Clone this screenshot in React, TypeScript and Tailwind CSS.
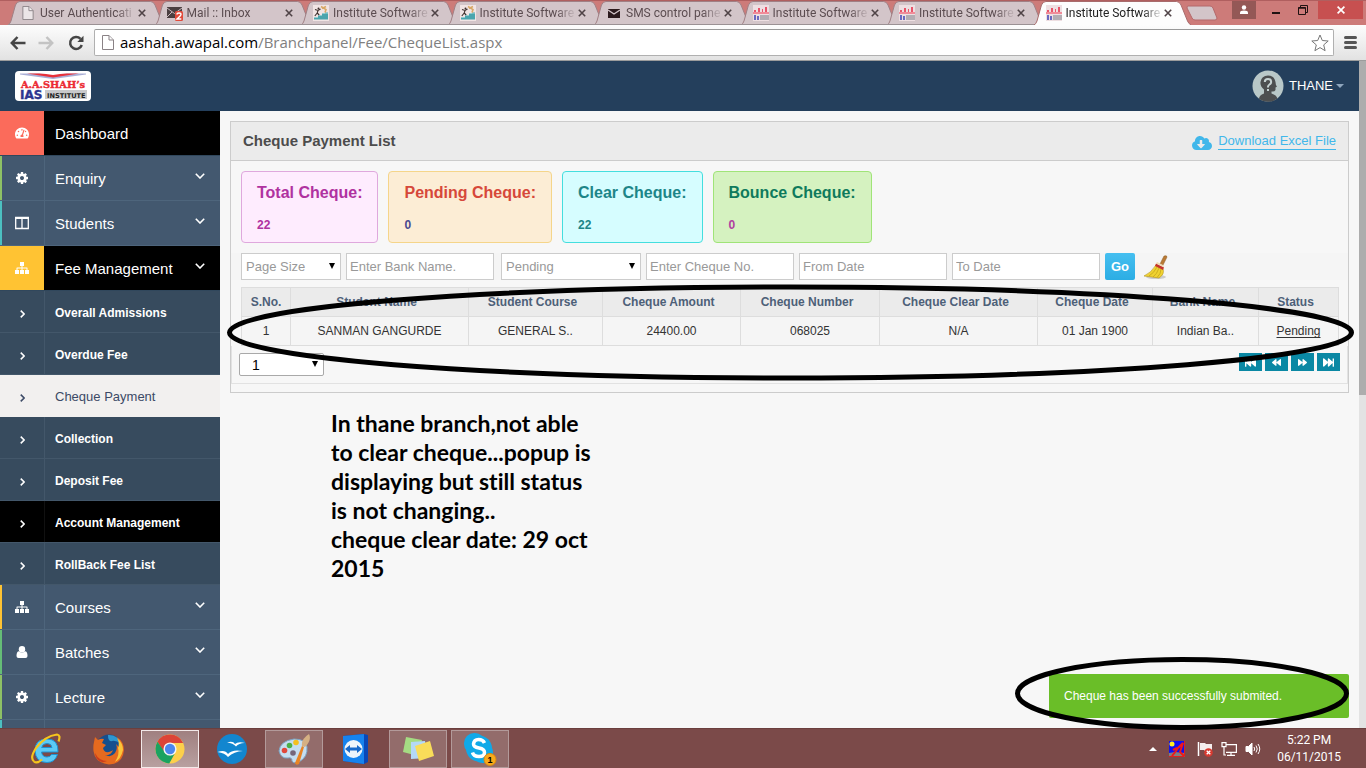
import React from "react";
import {
  FaBackward,
  FaCloudDownloadAlt,
  FaFastBackward,
  FaFastForward,
  FaForward,
  FaTachometerAlt,
} from "react-icons/fa";

/* ---------- browser chrome ---------- */

function PageIcon({ className }: { className: string }) {
  return (
    <svg viewBox="0 0 12 15" className={className} fill="#fff" fillOpacity=".55" stroke="#8a8286">
      <path d="M.5.5h6.5l4.500 4.500v9.500H.5z" />
      <path d="M7 .5v4.500h4.500" />
    </svg>
  );
}

function MailBadgeIcon() {
  return (
    <svg viewBox="0 0 16 16" className="size-4">
      <rect y="2" width="15" height="11" fill="#4a3f41" />
      <path d="M0 3l7.500 5.500L15 3M0 12l5-5M15 12l-5-5" stroke="#c9b9bd" fill="none" />
      <rect x="8" y="6" width="8" height="10" rx="1.500" fill="#e14a3a" />
      <path d="M10 9.500q0-1.500 2-1.500t2 1.500q0 1-4 4.500h4.300" fill="none" stroke="#fff" strokeWidth="1.400" />
    </svg>
  );
}

function StepsIcon() {
  return (
    <svg viewBox="0 0 16 16" className="size-4">
      <rect width="16" height="16" fill="#f1e4e4" />
      <path d="M1 14.500v-2h4v-2h4v-2h3v-1h3v7z" fill="#4aa5ae" />
      <path d="M1 12.500h4M5 10.500h4M9 8.500h6" stroke="#8fd0d4" strokeWidth=".6" />
      <circle cx="5.500" cy="3.500" r="1" fill="#3d2f2c" />
      <path d="M2 4.500l3 1 2.500-1.500M5 5.500L4.200 8l2 2M4.200 8l-2.400 3" stroke="#3d2f2c" strokeWidth="1.100" fill="none" />
      <path d="M8 1.500l5 3-1 3M9 3.500l4-2" stroke="#d8a866" strokeWidth="1.600" fill="none" />
    </svg>
  );
}

function EnvelopeIcon() {
  return (
    <svg viewBox="0 0 16 16" className="size-4">
      <rect x="2" y="4" width="12" height="9" fill="#2b1a1d" />
      <path d="M2 5l6 4 6-4" stroke="#d3c5c9" strokeWidth="1.300" fill="none" />
    </svg>
  );
}

function LogoFavicon() {
  return (
    <svg viewBox="0 0 16 16" className="size-4">
      <rect width="16" height="16" fill="#eedfe2" />
      <path d="M1 5h2v3H1zM5 3h2v5H5zM9 4h1v4H9zM12 2h2v6h-2z" fill="#e8556a" />
      <path d="M0 7h16v2H0z" fill="#f08b98" />
      <path d="M1 10h2v5H1zM4 11h2v4H4z" fill="#6a6ac0" />
      <path d="M7 10h9v5H7z" fill="#b3adb3" />
    </svg>
  );
}

const tabs = [
  { title: "User Authenticati", icon: <PageIcon className="h-3.5 w-4" /> },
  { title: "Mail :: Inbox", icon: <MailBadgeIcon /> },
  { title: "Institute Software", icon: <StepsIcon /> },
  { title: "Institute Software", icon: <StepsIcon /> },
  { title: "SMS control pane", icon: <EnvelopeIcon /> },
  { title: "Institute Software", icon: <LogoFavicon /> },
  { title: "Institute Software", icon: <LogoFavicon /> },
  { title: "Institute Software", icon: <LogoFavicon />, active: true },
];

function TabStrip() {
  return (
    <div className="flex h-[25px] shrink-0 justify-between border-t border-[#b05f5f] bg-[#cd7b79] font-[Roboto,sans-serif]">
      <div className="flex min-w-0 flex-1 pl-2">
        <div className="grid w-[1172px] grid-cols-8">
          {tabs.map((tab, i) => (
            <div key={i} className={tab.active ? "relative z-10 flex items-center pl-3" : "relative flex items-center pl-3"}>
              <svg
                viewBox="0 0 158 24"
                preserveAspectRatio="none"
                className="absolute left-0 top-0 h-6 w-[calc(100%+11px)]"
              >
                <path
                  d="M0 24Q2 23 3 20L7.500 4Q9 .5 12 .5H143Q146 .5 147.500 4L154 20Q155 23 158 24z"
                  fill={tab.active ? "#fdfdfd" : "#d3c5c9"}
                />
                <path
                  d="M0 24Q2 23 3 20L7.500 4Q9 .5 12 .5H143Q146 .5 147.500 4L154 20Q155 23 158 24"
                  fill="none"
                  stroke={tab.active ? "#a86a6b" : "#a08085"}
                />
                {!tab.active && <path d="M0 23.500H158" stroke="#9b9194" />}
              </svg>
              <span className="relative shrink-0">{tab.icon}</span>
              <span
                className={
                  tab.active
                    ? "relative ml-1 w-[98px] shrink-0 whitespace-nowrap text-xs text-[#222] [mask-image:linear-gradient(to_right,#000_78%,rgb(0_0_0/0.2)_94%)]"
                    : "relative ml-1 w-[98px] shrink-0 whitespace-nowrap text-xs text-[#5b4c50] [mask-image:linear-gradient(to_right,#000_78%,rgb(0_0_0/0.2)_94%)]"
                }
              >
                {tab.title}
              </span>
              <button aria-label="Close tab" className="relative shrink-0">
                <svg viewBox="0 0 8 8" className="size-2" stroke="#4f4346" strokeWidth="1.600">
                  <path d="M.8.8l6.400 6.400M7.200.8L.8 7.200" />
                </svg>
              </button>
            </div>
          ))}
        </div>
        <button aria-label="New tab" className="ml-1.5 h-6">
          <svg viewBox="0 0 32 16" className="h-4 w-8">
            <path d="M2 1h22q2 0 3 2l4 10q0 2-2 2H9q-2 0-3-2L1 3q0-2 1-2z" fill="#d3c5c9" stroke="#b4696b" />
          </svg>
        </button>
      </div>
      <div className="flex h-[18px] shrink-0 pr-[3px]">
        <button aria-label="Profile" className="flex w-6 items-center justify-center bg-[#945856]">
          <svg viewBox="0 0 10 10" className="size-2.5" fill="#fff">
            <circle cx="5" cy="2.500" r="2.200" />
            <path d="M1 9V7.500Q1 5.500 5 5.500t4 2V9z" />
          </svg>
        </button>
        <button aria-label="Minimize" className="ml-4 flex w-2.5 items-center">
          <span className="mt-1.5 h-0.5 w-2 bg-[#1f1212]" />
        </button>
        <button aria-label="Restore" className="ml-4 flex w-2.5 items-center">
          <svg viewBox="0 0 10 10" className="size-2.5" fill="none" stroke="#1f1212">
            <path d="M.5 2.500h7v7h-7zM2.500 2.500v-2h7v7h-2" />
            <path d="M.5 3h7" strokeWidth="1.500" />
          </svg>
        </button>
        <button aria-label="Close" className="ml-2.5 flex w-[45px] items-center justify-center bg-[#c75050]">
          <svg viewBox="0 0 8 8" className="size-2" stroke="#fff" strokeWidth="1.700">
            <path d="M.6.6l6.800 6.800M7.400.6L.6 7.400" />
          </svg>
        </button>
      </div>
    </div>
  );
}

function AddressBar() {
  return (
    <div className="flex h-9 shrink-0 items-center border-b border-[#9c9c9c] bg-linear-to-b from-[#fdfdfd] to-[#e2e2e2] pl-2.5">
      <button aria-label="Back">
        <svg viewBox="0 0 16 14" className="h-3.5 w-4" fill="none" stroke="#454545" strokeWidth="2.500">
          <path d="M15.500 7H2M7.500 1L1.800 7l5.700 6" />
        </svg>
      </button>
      <button aria-label="Forward" className="ml-3">
        <svg viewBox="0 0 16 14" className="h-3.5 w-4" fill="none" stroke="#c3c3c3" strokeWidth="2.500">
          <path d="M.5 7H14M8.500 1l5.700 6-5.700 6" />
        </svg>
      </button>
      <button aria-label="Reload" className="ml-3.5">
        <svg viewBox="0 0 16 16" className="size-4" fill="none" stroke="#454545" strokeWidth="2.500">
          <path d="M13.800 10A6 6 0 1 1 12.500 3.800" />
          <path d="M15.500.8v6.200H9.300z" fill="#454545" stroke="none" />
        </svg>
      </button>
      <div className="ml-2.5 flex h-[27px] min-w-0 flex-1 items-center rounded-xs border border-[#b0b0b0] border-t-[#999] bg-white pl-[7px] pr-1">
        <PageIcon className="h-[15px] w-3 shrink-0" />
        <span className="ml-1.5 flex-1 whitespace-nowrap pb-0.5 font-['Open_Sans',sans-serif] text-[15px] leading-5 text-[#808080]">
          <span className="text-black">aashah.awapal.com</span>/Branchpanel/Fee/ChequeList.aspx
        </span>
        <button aria-label="Bookmark">
          <svg viewBox="0 0 18 18" className="size-[18px]" fill="none" stroke="#777" strokeLinejoin="round">
            <path d="M9 1l2.300 5.500 5.900.5-4.500 3.900 1.400 5.800L9 13.600l-5.100 3.100 1.400-5.800L.8 7l5.900-.5z" />
          </svg>
        </button>
      </div>
      <button aria-label="Menu" className="ml-2.5 mr-[9px] flex w-[13px] flex-col gap-0.5">
        <span className="h-[3px] rounded-full bg-[#555]" />
        <span className="h-[3px] rounded-full bg-[#555]" />
        <span className="h-[3px] rounded-full bg-[#555]" />
      </button>
    </div>
  );
}

/* ---------- web page ---------- */

function InstituteLogo() {
  return (
    <a href="#home" aria-label="Home">
      <svg viewBox="0 0 76 30" className="h-[30px] w-[76px]">
        <rect width="76" height="30" rx="4" fill="#fff" />
        <path d="M5 2.500h66v1L38 8 5 3.500z" fill="#a9aed6" />
        <path d="M12 2.500h52L38 6.500z" fill="#e8303a" />
        <path d="M24 2h28L38 4z" fill="#fff" />
        <rect x="30" y="19" width="42" height="9" fill="#c9c9cb" />
        <text x="6" y="17" fontFamily="DejaVu Serif, serif" fontWeight="bold" fontSize="9.800" fill="#ec2b34" stroke="#ec2b34" strokeWidth=".4">
          A.A.SHAH’s
        </text>
        <text x="5" y="27.500" fontFamily="DejaVu Sans, sans-serif" fontWeight="bold" fontSize="12" fill="#2d3590" stroke="#2d3590" strokeWidth=".4">
          IAS
        </text>
        <text x="32" y="26.500" fontFamily="DejaVu Sans, sans-serif" fontWeight="bold" fontSize="6.600" fill="#222">
          INSTITUTE
        </text>
      </svg>
    </a>
  );
}

function SiteHeader() {
  return (
    <header className="flex h-[50px] shrink-0 items-center justify-between bg-[#243f5c] pl-[15px] pr-[15px]">
      <InstituteLogo />
      <button className="flex items-center">
        <svg viewBox="0 0 32 32" className="size-8">
          <circle cx="16" cy="16" r="15.500" fill="#b9c8c8" />
          <path d="M7 29q0-4 5-5.500v-4Q8 16 8.500 12 9.500 5.500 16 5.500T23.500 12q0 3 1.500 4.500l-1.500 1v2.500q-1 2-4 1.500v2q5 1.500 6 5A15.500 15.500 0 0 1 7 29z" fill="#4d4f50" />
          <path d="M12.800 12q0-3 3.200-3t3.200 3q0 1.500-1.700 2.500t-1.500 3M16 19v2" fill="none" stroke="#c6d2d2" strokeWidth="2" />
        </svg>
        <span className="ml-[5px] text-[13px] text-white">THANE</span>
        <svg viewBox="0 0 8 4" className="ml-[3px] h-1 w-2" fill="#8fa6bd">
          <path d="M0 0h8L4 4z" />
        </svg>
      </button>
    </header>
  );
}

function CogIcon() {
  return (
    <svg viewBox="0 0 1792 1792" className="size-3.5" fill="currentColor">
      <path d="M1152 896q0-106-75-181t-181-75-181 75-75 181 75 181 181 75 181-75 75-181zm512-109v222q0 12-8 23t-20 13l-185 28q-19 54-39 91 35 50 107 138 10 12 10 25t-9 23q-27 37-99 108t-94 71q-12 0-26-9l-138-108q-44 23-91 38-16 136-29 186-7 28-36 28h-222q-14 0-24.500-8.500t-11.500-21.500l-28-184q-49-16-90-37l-141 107q-10 9-25 9-14 0-25-11-126-114-165-168-7-10-7-23 0-12 8-23 15-21 51-66.500t54-70.500q-27-50-41-99l-183-27q-13-2-21-12.500t-8-23.500v-222q0-12 8-23t19-13l186-28q14-46 39-92-40-57-107-138-10-12-10-24 0-10 9-23 26-36 98.500-107.500t94.500-71.500q13 0 26 10l138 107q44-23 91-38 16-136 29-186 7-28 36-28h222q14 0 24.500 8.500t11.500 21.500l28 184q49 16 90 37l142-107q9-9 24-9 13 0 25 10 129 119 165 170 7 8 7 22 0 12-8 23-15 21-51 66.500t-54 70.500q26 50 41 98l183 28q13 2 21 12.500t8 23.500z" />
    </svg>
  );
}

function ColumnsIcon() {
  return (
    <svg viewBox="0 0 14 14" className="size-3.5">
      <path d="M.7 1.500h12.600v11H.7zM7 1.500v11" fill="none" stroke="currentColor" strokeWidth="1.300" />
      <path d="M0 1h14v2H0z" fill="currentColor" />
    </svg>
  );
}

function SitemapIcon() {
  return (
    <svg viewBox="0 0 14 14" className="size-3.5" fill="currentColor">
      <path d="M5 1h4v4H7.500v1.500H12q.5 0 .5.500v2H14v4h-4V9h1.500V7.500h-4V9H9v4H5V9h1.500V7.500h-4V9H4v4H0V9h1.500V7q0-.5.500-.5h4.500V5H5z" />
    </svg>
  );
}

function UserIcon() {
  return (
    <svg viewBox="0 0 14 14" className="size-3.5" fill="currentColor">
      <circle cx="7" cy="4.200" r="3.200" />
      <path d="M1.500 11q0-4.500 2.500-4.700Q7 8.800 10 6.300q2.500.2 2.500 4.700 0 2-2 2h-7q-2 0-2-2z" />
    </svg>
  );
}

function ChevronDown() {
  return (
    <svg viewBox="0 0 10 6" className="mr-[15px] mt-[17px] h-1.5 w-2.5" fill="none" stroke="currentColor" strokeWidth="1.600">
      <path d="M.8.8L5 5 9.200.8" />
    </svg>
  );
}

function ChevronRight() {
  return (
    <svg viewBox="0 0 6 10" className="mt-1 h-2 w-[5px]" fill="none" stroke="currentColor" strokeWidth="1.900">
      <path d="M.8.8L5 5 .8 9.200" />
    </svg>
  );
}

type Entry = { label: string; icon: React.ReactNode; bar: string; open?: boolean; arrow?: boolean };

const topEntries: Entry[] = [
  { label: "Dashboard", icon: <FaTachometerAlt className="size-3.5" />, bar: "bg-[#fb6b5b]", open: true },
  { label: "Enquiry", icon: <CogIcon />, bar: "bg-[#8ec165]", arrow: true },
  { label: "Students", icon: <ColumnsIcon />, bar: "bg-[#4cc0c1]", arrow: true },
  { label: "Fee Management", icon: <SitemapIcon />, bar: "bg-[#ffc333]", open: true, arrow: true },
];

const bottomEntries: Entry[] = [
  { label: "Courses", icon: <SitemapIcon />, bar: "bg-[#ffc333]", arrow: true },
  { label: "Batches", icon: <UserIcon />, bar: "bg-[#65bd77]", arrow: true },
  { label: "Lecture", icon: <CogIcon />, bar: "bg-[#8ec165]", arrow: true },
  { label: "", icon: null, bar: "bg-[#4cc0c1]" },
];

const feeEntries = [
  "Overall Admissions",
  "Overdue Fee",
  "Cheque Payment",
  "Collection",
  "Deposit Fee",
  "Account Management",
  "RollBack Fee List",
];

function MenuEntry({ entry }: { entry: Entry }) {
  return (
    <a
      href="#menu"
      className={
        entry.open
          ? "flex h-[45px] border-b border-[#30475c] bg-black text-white"
          : "flex h-[45px] border-b border-[#4e657c] bg-[#43586f] text-white"
      }
    >
      {entry.open ? (
        <span className={`flex w-11 items-center justify-center ${entry.bar}`}>{entry.icon}</span>
      ) : (
        <>
          <span className={`w-0.5 ${entry.bar}`} />
          <span className="flex w-[43px] items-center justify-center border-r border-[#4e657c] pr-0.5">{entry.icon}</span>
        </>
      )}
      <span
        className={
          entry.open ? "flex-1 self-center pl-[11px] pt-0.5 text-[15px]" : "flex-1 self-center pl-2.5 pt-0.5 text-[15px]"
        }
      >
        {entry.label}
      </span>
      {entry.arrow && <ChevronDown />}
    </a>
  );
}

function Sidebar() {
  return (
    <nav className="w-[220px] shrink-0 overflow-hidden bg-[#43586f]">
      {topEntries.map((e) => (
        <MenuEntry key={e.label} entry={e} />
      ))}
      {feeEntries.map((label) => {
        const look =
          label === "Cheque Payment"
            ? "flex h-[42px] bg-[#f2f0ef] text-[13px] text-[#3c4a66]"
            : label === "Account Management"
              ? "flex h-[42px] border-b border-[#43576a] bg-black text-xs font-bold text-white"
              : "flex h-[42px] border-b border-[#43576a] bg-[#374b5e] text-xs font-bold text-white";
        const cell =
          label === "Cheque Payment"
            ? "flex w-[45px] items-center justify-center"
            : label === "Account Management"
              ? "flex w-[45px] items-center justify-center border-r border-[#111]"
              : "flex w-[45px] items-center justify-center border-r border-[#43576a]";
        return (
          <a key={label} href="#fee" className={look}>
            <span className={cell}>
              <ChevronRight />
            </span>
            <span className="self-center pl-2.5 pt-0.5">{label}</span>
          </a>
        );
      })}
      {bottomEntries.map((e) => (
        <MenuEntry key={e.label} entry={e} />
      ))}
    </nav>
  );
}

const stats = [
  { title: "Total Cheque:", value: "22", box: "border-[#dfa8dd] bg-[#feecfe] text-[#b032a0]", num: "" },
  { title: "Pending Cheque:", value: "0", box: "border-[#f5d58a] bg-[#fcedd5] text-[#d6483a]", num: "text-[#4a4a90]" },
  { title: "Clear Cheque:", value: "22", box: "border-[#44dede] bg-[#d6fdff] text-[#1d8588]", num: "" },
  { title: "Bounce Cheque:", value: "0", box: "border-[#a0e478] bg-[#d5f2c0] text-[#0f7a5c]", num: "text-[#b040a0]" },
];

function SelectBox({ label, value, className, arrow }: { label: string; value: string; className: string; arrow: string }) {
  return (
    <div className="relative flex">
      <select aria-label={label} className={`appearance-none ${className}`}>
        <option>{value}</option>
      </select>
      <svg viewBox="0 0 6 6" className={`pointer-events-none absolute size-1.5 ${arrow}`}>
        <path d="M0 0h6L3 6z" />
      </svg>
    </div>
  );
}

const field = "h-[27px] border border-[#ccc] bg-white px-[3px] text-[13px] text-[#999] placeholder:text-[#999]";

function Filters() {
  return (
    <form className="mt-2.5 flex items-center gap-[5px] bg-[#f5f5f5] pl-2.5" onSubmit={(e) => e.preventDefault()}>
      <SelectBox label="Page size" value="Page Size" className={`${field} w-[100px] pl-1`} arrow="right-1.5 top-2.5" />
      <input aria-label="Bank name" placeholder="Enter Bank Name." className={`${field} mr-0.5 w-[148px]`} />
      <SelectBox label="Status" value="Pending" className={`${field} w-[140px] pl-1`} arrow="right-1.5 top-2.5" />
      <input aria-label="Cheque number" placeholder="Enter Cheque No." className={`${field} w-[148px]`} />
      <input aria-label="From date" placeholder="From Date" className={`${field} w-[148px]`} />
      <input aria-label="To date" placeholder="To Date" className={`${field} w-[148px]`} />
      <button className="h-[27px] w-[30px] rounded-xs bg-linear-to-b from-[#45bff0] to-[#2bade4] text-[13px] font-bold text-white">
        Go
      </button>
      <button aria-label="Clear filters" className="ml-1">
        <svg viewBox="0 0 24 26" className="h-[26px] w-6">
          <ellipse cx="12" cy="23" rx="10" ry="2" fill="#ccc" />
          <path d="M16 10L20 2q3-1 3 1l-4 8z" fill="#b97a35" stroke="#8c5a22" strokeWidth=".5" />
          <path d="M12 11l7 4q2 5-4 9Q8 23 0 22q7-3 12-11z" fill="#f0d231" stroke="#b3941a" strokeWidth=".6" />
          <path d="M13 13q-3 6-8 9M15 14q-2 6-6 9M17 15q0 5-4 8.500" stroke="#c4a41c" fill="none" strokeWidth=".8" />
          <path d="M12 9.500l8 4-1 2.500-8-4z" fill="#c4342b" />
          <path d="M13 8l7 3.500-.5 1.500-7.500-3.500z" fill="#efd9b0" />
        </svg>
      </button>
    </form>
  );
}

const columns = [
  { name: "S.No.", width: "w-[49px]", value: "1" },
  { name: "Student Name", width: "w-[178px]", value: "SANMAN GANGURDE" },
  { name: "Student Course", width: "w-[134px]", value: "GENERAL S.." },
  { name: "Cheque Amount", width: "w-[138px]", value: "24400.00" },
  { name: "Cheque Number", width: "w-[139px]", value: "068025" },
  { name: "Cheque Clear Date", width: "w-[158px]", value: "N/A" },
  { name: "Cheque Date", width: "w-[115px]", value: "01 Jan 1900" },
  { name: "Bank Name", width: "w-[106px]", value: "Indian Ba.." },
  { name: "Status", width: "w-[80px]", value: "Pending" },
];

function ChequeTable() {
  return (
    <div className="mt-[7px] px-2.5">
      <table className="w-full table-fixed border-collapse text-xs">
        <thead>
          <tr className="h-[29px] bg-[#ebebeb] text-[#4d6078]">
            {columns.map((c) => (
              <th key={c.name} className={`${c.width} border border-[#ddd] pr-1.5 first:pr-0`}>
                {c.name}
              </th>
            ))}
          </tr>
        </thead>
        <tbody>
          <tr className="h-[29px] bg-[#f5f5f5] text-center text-[#333]">
            {columns.map((c) => (
              <td key={c.name} className="border border-[#ddd]">
                {c.name === "Status" ? (
                  <a href="#status" className="underline underline-offset-2">
                    {c.value}
                  </a>
                ) : (
                  c.value
                )}
              </td>
            ))}
          </tr>
        </tbody>
      </table>
    </div>
  );
}

const pagerButton = "flex h-[18px] w-[23px] items-center justify-center bg-[#0a88a4] text-white";

function Pager() {
  return (
    <div className="flex h-[38px] items-start justify-between border-x border-b border-[#e2e2e2] pl-[7px] pr-[7px] pt-[7px]">
      <SelectBox
        label="Page"
        value="1"
        className="h-[23px] w-[85px] rounded-xs border border-[#a9a9a9] bg-white pl-3 text-sm text-black"
        arrow="right-1.5 top-2"
      />
      <div className="flex gap-[3px]">
        <button aria-label="First" className={pagerButton}>
          <FaFastBackward className="size-[11px]" />
        </button>
        <button aria-label="Previous" className={pagerButton}>
          <FaBackward className="size-[9px]" />
        </button>
        <button aria-label="Next" className={pagerButton}>
          <FaForward className="size-[9px]" />
        </button>
        <button aria-label="Last" className={pagerButton}>
          <FaFastForward className="size-[11px]" />
        </button>
      </div>
    </div>
  );
}

function ChequePanel() {
  return (
    <section className="ml-2.5 mr-2.5 mt-2.5 border border-[#ccc] pb-2">
      <div className="flex h-[39px] items-center justify-between border-b border-[#ccc] bg-[#ebebeb] px-3">
        <h1 className="text-[15px] font-bold text-[#4c4c4c]">Cheque Payment List</h1>
        <div className="flex items-center gap-1.5 text-[#41b7ea]">
          <FaCloudDownloadAlt className="mt-1 size-5" />
          <a href="#excel" className="border-b border-[#41b7ea] text-[13px] leading-4">
            Download Excel File
          </a>
        </div>
      </div>
      <div className="mt-2.5 flex gap-2.5 pl-2.5">
        {stats.map((s) => (
          <div key={s.title} className={`h-[72px] rounded-sm border px-[15px] pt-2.5 font-bold ${s.box}`}>
            <h2 className="text-base leading-[22px]">{s.title}</h2>
            <p className={`mt-3 text-xs leading-[18px] ${s.num}`}>{s.value}</p>
          </div>
        ))}
      </div>
      <Filters />
      <ChequeTable />
      <Pager />
    </section>
  );
}

/* ---------- taskbar ---------- */

function IeIcon() {
  return (
    <svg viewBox="0 0 32 32" className="size-8">
      <path d="M28 19H11.500q.8 5 5.500 5 3.200 0 4.500-2.500h6Q25 29.500 17 29.500q-11.500 0-12-12Q5 6 17 6q11.500 0 11 13zm-6-4.500Q21.500 10.500 17 10.500q-4.500 0-5.300 4z" fill="#5ccbf6" stroke="#1c93d4" />
      <path d="M4 28.500Q-.5 25 6 15 15 3 27 1.500q4 .5 1.500 7" fill="none" stroke="#f6c51c" strokeWidth="2.200" />
      <path d="M4 28.500q3 2.500 8-2" fill="none" stroke="#f6c51c" strokeWidth="2.200" />
    </svg>
  );
}

function FirefoxIcon() {
  return (
    <svg viewBox="0 0 32 32" className="size-8">
      <circle cx="17" cy="14.500" r="13" fill="#164f8e" />
      <path d="M17 2q9 0 12 9-5-4-9-3t-4-6z" fill="#2f97cf" />
      <path d="M2 9l1-5 3 3q3-2 6-1l-2 4 4 2-3 3q1 5 6 4 3-1 4-2-2 6-8 5 6 3 10-2 3-4 1-9 4 3 3 7 2-8-2-14 7 5 7 13-1 14-15 14.500Q3 30 1.500 18 1 13 2 9z" fill="#e66a1f" />
      <path d="M25 5q6 5 6 12-2 9-8 12 5-8 3-14 2-5-1-10z" fill="#fbc53a" />
      <path d="M3 20q4 8 12 8-6 3-10-2-2-3-2-6z" fill="#cc3d1b" />
    </svg>
  );
}

function ChromeIcon() {
  return (
    <svg viewBox="0 0 32 32" className="size-[30px]">
      <circle cx="16" cy="16" r="15.500" fill="#fcd04b" />
      <path d="M16 .5A15.500 15.500 0 0 1 30 9.500H16L9.700 19.500 2.600 8.200A15.500 15.500 0 0 1 16 .5z" fill="#dc4437" />
      <path d="M2.600 8.200L10.300 19.300 16 23l5-2-5.800 10.500A15.500 15.500 0 0 1 2.600 8.200z" fill="#1ba261" />
      <circle cx="16" cy="16" r="7" fill="#f4f4f4" />
      <circle cx="16" cy="16" r="5.500" fill="#4b87ee" />
    </svg>
  );
}

function GullsIcon() {
  return (
    <svg viewBox="0 0 32 32" className="size-8">
      <circle cx="16" cy="16" r="15" fill="#1286cf" />
      <path d="M11 9.500q6-2 8 1.500Q22 8.300 29 10q-6-.2-9 3.500Q17 10 11 9.500z" fill="#fff" />
      <path d="M1.500 19Q9 16 12 21q4-5 15-3-9 .5-15 6Q9 20 1.500 19z" fill="#fff" />
    </svg>
  );
}

function PaletteIcon() {
  return (
    <svg viewBox="0 0 32 32" className="size-8">
      <path d="M1 18Q2 8 16 6q12 0 13 8 1 10-8 15-6 2-7-1 0-4-4-3-7 1-9-7z" fill="#c5def0" stroke="#7ba4c4" />
      <circle cx="6.500" cy="17.500" r="2.800" fill="#e0483b" />
      <circle cx="11.500" cy="12.500" r="2.800" fill="#4ab04a" />
      <circle cx="18" cy="9.500" r="2.800" fill="#f4c01f" />
      <circle cx="15" cy="20" r="2.800" fill="#76677a" />
      <path d="M17 30l7-17 2 1-5 17q-3 2-4-1z" fill="#e88424" />
      <path d="M24 13q-1-7 7-12 3 6-4 13z" fill="#d5b083" />
    </svg>
  );
}

function RemoteIcon() {
  return (
    <svg viewBox="0 0 32 32" className="size-8">
      <path d="M3 3l21-2 4 1v27l-4 2-21-3z" fill="#0948b8" />
      <path d="M3 3l21-2v30L3 28z" fill="#1683ee" />
      <circle cx="13.500" cy="16" r="9" fill="#eef5fb" />
      <path d="M5 16l5-4v2.500h7V12l5 4-5 4v-2.500h-7V20z" fill="#1769ca" />
    </svg>
  );
}

function NotesIcon() {
  return (
    <svg viewBox="0 0 34 32" className="h-8 w-[34px]">
      <path d="M5 4l16 3-4 16-15-4z" fill="#a5dc83" />
      <path d="M10 9l14-1 2 17-16 1z" fill="#b4d9f7" />
      <path d="M14 13l15-5 4 15-15 5z" fill="#f9dd59" />
    </svg>
  );
}

function SkypeIcon() {
  return (
    <svg viewBox="0 0 34 34" className="h-[34px] w-[34px]">
      <rect x="1" y="1" width="21" height="21" rx="10" fill="#10a9e8" />
      <circle cx="16" cy="16.500" r="13" fill="#10a9e8" />
      <rect x="10" y="11" width="20" height="20" rx="9" fill="#10a9e8" />
      <path d="M21.500 11q-1.500-3.500-6-3.500T10.500 12q0 3 5.500 4t5.500 4.500q0 4-5.500 4t-6.500-4" fill="none" stroke="#fff" strokeWidth="3.500" />
      <circle cx="27" cy="27.500" r="6" fill="#f9a91b" stroke="#d98b10" />
      <text x="24.500" y="31" fontFamily="Liberation Sans, sans-serif" fontSize="9" fontWeight="bold">
        1
      </text>
    </svg>
  );
}

const apps = [
  { name: "Internet Explorer", icon: <IeIcon />, state: "" },
  { name: "Firefox", icon: <FirefoxIcon />, state: "" },
  { name: "Chrome", icon: <ChromeIcon />, state: "border border-[#f3e9e9] bg-linear-to-b from-[#a08080] to-[#b8a0a0]" },
  { name: "OpenOffice", icon: <GullsIcon />, state: "" },
  { name: "Paint", icon: <PaletteIcon />, state: "border border-[#b39a9a] bg-[#936c6b]" },
  { name: "TeamViewer", icon: <RemoteIcon />, state: "" },
  { name: "Sticky Notes", icon: <NotesIcon />, state: "border border-[#b39a9a] bg-[#936c6b]" },
  { name: "Skype", icon: <SkypeIcon />, state: "border border-[#b39a9a] bg-[#936c6b]" },
];

function Taskbar() {
  return (
    <footer className="flex h-10 shrink-0 items-center justify-between border-t border-[#6b3f3e] bg-[#7b4a49]">
      <div className="flex gap-1 pl-[17px]">
        {apps.map((a) => (
          <button key={a.name} aria-label={a.name} className={`flex h-[38px] w-[58px] items-center justify-center ${a.state}`}>
            {a.icon}
          </button>
        ))}
      </div>
      <div className="flex items-center gap-2 pr-[25px] font-[Roboto,sans-serif] text-white">
        <svg viewBox="0 0 8 4" className="mr-1 h-1 w-2" fill="#fff">
          <path d="M0 4h8L4 0z" />
        </svg>
        <svg viewBox="0 0 16 16" className="size-4">
          <rect width="16" height="16" fill="#1010f0" />
          <path d="M0 12l6-1 10 1v4H0z" fill="#808080" />
          <circle cx="3" cy="3" r="2.500" fill="#ffee20" />
          <path d="M3 15l4-5 2-3 5-5-2 6-1 3 4 4M8 7L4 9" stroke="#f01818" strokeWidth="2" fill="none" />
          <path d="M0 15.500h15.500V0" stroke="#e02020" fill="none" />
        </svg>
        <svg viewBox="0 0 16 16" className="ml-1 size-4">
          <path d="M1.500 1v14" stroke="#fff" strokeWidth="1.500" />
          <path d="M3 2h5l1 1h6v7H8L7 9H3z" fill="#f4eded" />
          <circle cx="11.500" cy="11.500" r="4.300" fill="#d93a30" />
          <path d="M9.700 9.700l3.600 3.600M13.300 9.700l-3.600 3.600" stroke="#fff" strokeWidth="1.300" />
        </svg>
        <svg viewBox="0 0 16 16" className="size-4" fill="none" stroke="#fff" strokeWidth="1.200">
          <path d="M5.500 3.600h9.900v7.800H5M10 11.500V14M6 14.400h8M1 1.600h4v4H1zM3 6v8h2" />
        </svg>
        <svg viewBox="0 0 16 16" className="size-4" fill="none" stroke="#fff">
          <path d="M1 5.500h2.500L7 2v12l-3.500-3.500H1z" fill="#fff" />
          <path d="M9 6q1.500 2 0 4M11 4.500q2.500 3.500 0 7M13 3q3.500 5 0 10" />
        </svg>
        <div className="ml-2 text-center text-xs leading-[17px]">
          <div>5:22 PM</div>
          <div>06/11/2015</div>
        </div>
      </div>
    </footer>
  );
}

/* ---------- screen mark-up ---------- */

function Annotations() {
  return (
    <>
      <p className="absolute left-[331px] top-[409px] w-[280px] font-[Lato,sans-serif] text-[23px] font-bold leading-[29px] text-black [font-variant-ligatures:none]">
        In thane branch,not able
        <br />
        to clear cheque...popup is
        <br />
        displaying but still status
        <br />
        is not changing..
        <br />
        cheque clear date: 29 oct
        <br />
        2015
      </p>
      <svg className="pointer-events-none absolute left-0 top-0 h-[768px] w-[1366px]" fill="none" stroke="#000" strokeWidth="5">
        <ellipse cx="790.500" cy="332.500" rx="561" ry="45.500" />
        <ellipse cx="1182" cy="693.500" rx="164.500" ry="34" />
      </svg>
    </>
  );
}

export default function App() {
  return (
    <div className="relative flex h-screen flex-col overflow-hidden font-['Liberation_Sans',Arial,sans-serif]">
      <TabStrip />
      <AddressBar />
      <div className="flex min-h-0 flex-1">
        <div className="relative flex min-w-0 flex-1 flex-col bg-[#f7f7f7]">
          <SiteHeader />
          <div className="flex min-h-0 flex-1">
            <Sidebar />
            <main className="min-w-0 flex-1">
              <ChequePanel />
            </main>
          </div>
          <div role="status" className="absolute bottom-2.5 right-2.5 flex h-11 w-[300px] items-center rounded-xs bg-[#6abe28] pl-[15px] text-xs text-white">
            Cheque has been successfully submited.
          </div>
        </div>
        <div className="w-[7px] bg-[#e3e3e3]">
          <div className="h-1/2 bg-[#adadad]" />
        </div>
      </div>
      <Taskbar />
      <Annotations />
    </div>
  );
}
